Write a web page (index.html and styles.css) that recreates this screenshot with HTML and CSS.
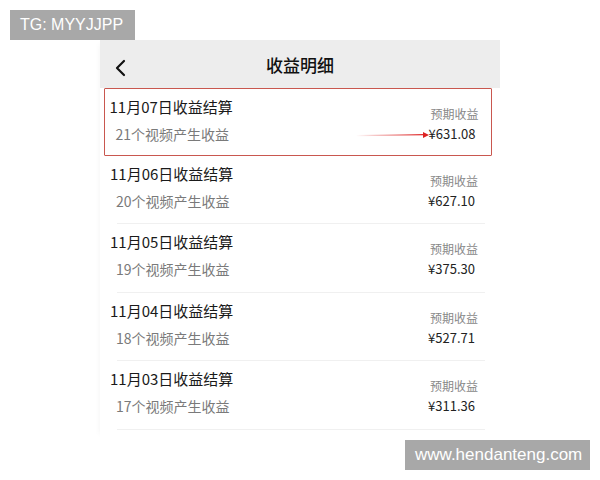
FILE: index.html
```html
<!DOCTYPE html>
<html lang="zh-CN">
<head>
  <meta charset="UTF-8"/>
  <meta name="viewport" content="width=device-width, initial-scale=1.0"/>
  <title>收益明细</title>
  <link rel="stylesheet" href="styles.css">
</head>
<body>
  <div class="mark mark-top">TG: MYYJJPP</div>

  <div class="panel">
    <div class="topbar">
      <svg class="back" width="12" height="18" viewBox="0 0 12 18">
        <path d="M10 2 L3 9 L10 16" fill="none" stroke="#111" stroke-width="2.2" stroke-linecap="round" stroke-linejoin="round"/>
      </svg>
      <span class="title">收益明细</span>
    </div>

    <div class="list">
      <div class="row hot">
        <div class="info">
          <div class="day">11月07日收益结算</div>
          <div class="count">21个视频产生收益</div>
        </div>
        <div class="money">
          <div class="label">预期收益</div>
          <div class="sum">¥631.08</div>
        </div>
        <svg class="pointer" width="74" height="8" viewBox="0 0 74 8">
          <defs>
            <linearGradient id="fade" x1="0" x2="1" y1="0" y2="0">
              <stop offset="0" stop-color="#d33" stop-opacity="0"/>
              <stop offset="1" stop-color="#d22"/>
            </linearGradient>
          </defs>
          <path d="M0 4.6 L69 3.6" stroke="url(#fade)" stroke-width="1.4"/>
          <path d="M67 1 L73 4 L67 7 Z" fill="#d22"/>
        </svg>
      </div>
      <div class="row">
        <div class="info">
          <div class="day">11月06日收益结算</div>
          <div class="count">20个视频产生收益</div>
        </div>
        <div class="money">
          <div class="label">预期收益</div>
          <div class="sum">¥627.10</div>
        </div>
      </div>
      <div class="row">
        <div class="info">
          <div class="day">11月05日收益结算</div>
          <div class="count">19个视频产生收益</div>
        </div>
        <div class="money">
          <div class="label">预期收益</div>
          <div class="sum">¥375.30</div>
        </div>
      </div>
      <div class="row">
        <div class="info">
          <div class="day">11月04日收益结算</div>
          <div class="count">18个视频产生收益</div>
        </div>
        <div class="money">
          <div class="label">预期收益</div>
          <div class="sum">¥527.71</div>
        </div>
      </div>
      <div class="row">
        <div class="info">
          <div class="day">11月03日收益结算</div>
          <div class="count">17个视频产生收益</div>
        </div>
        <div class="money">
          <div class="label">预期收益</div>
          <div class="sum">¥311.36</div>
        </div>
      </div>
    </div>
  </div>

  <div class="mark mark-bottom">www.hendanteng.com</div>
</body>
</html>
```

FILE: styles.css
```css
body { margin: 0; background: #fff; font-family: "Noto Sans CJK SC", "Noto Sans", sans-serif; color: #222; }

.mark { position: absolute; background: #a8a8a8; color: #fff; font-family: "Liberation Sans", Arial, sans-serif; font-size: 16px; line-height: 30px; padding: 0 10px; }
.mark-top { left: 10px; top: 10px; width: 105px; }
.mark-bottom { left: 405px; top: 440px; width: 165px; font-size: 17px; }

.panel { width: 400px; margin: 40px 0 0 100px; padding-bottom: 8px; background: #fff; box-shadow: -4px 0 6px -4px rgba(0,0,0,0.05); }

.topbar { position: relative; height: 48px; background: #ededed; display: flex; align-items: center; justify-content: center; }
.back { position: absolute; left: 14px; top: 19px; }
.title { font-size: 17px; font-weight: 500; color: #111; }

.list { display: flex; flex-direction: column; }
.row { position: relative; height: 68.5px; margin-left: 4px; width: 388px; display: flex; justify-content: space-between; box-sizing: border-box; padding: 0 14px 0 6px; }
.row::after { content: ""; position: absolute; left: 13px; right: 7px; bottom: 0; height: 1px; background: #f0f0f0; }
.row.hot { border: 1.5px solid #c9574f; border-radius: 1px; padding: 0 12.5px 0 4.5px; height: 67.5px; }
.row.hot::after { display: none; }

.info { padding-top: 7px; }
.day { font-size: 15px; line-height: 22px; color: #1a1a1a; }
.count { font-size: 14px; line-height: 22px; margin-top: 5px; padding-left: 6px; color: #7a7a7a; }

.money { padding-top: 16px; text-align: right; }
.label { font-size: 12px; line-height: 18px; color: #888; }
.sum { font-size: 13px; line-height: 20px; margin-top: 1px; padding-right: 3px; color: #222; }

.pointer { position: absolute; left: 251px; top: 42px; }
```
